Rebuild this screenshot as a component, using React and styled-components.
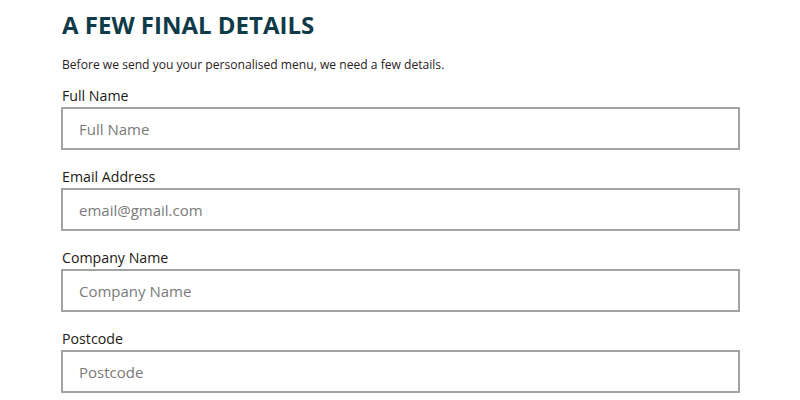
import React from 'react'
import styled, { createGlobalStyle } from 'styled-components'

const GlobalStyle = createGlobalStyle`
  body {
    margin: 0;
    background: #ffffff;
    font-family: "Open Sans", "Liberation Sans", sans-serif;
  }
`

const Container = styled.div`
  width: 800px;
  height: 400px;
  overflow: hidden;
  padding: 0 60px 0 61px;
  box-sizing: border-box;
`
const Title = styled.h1`
  margin: 9px 0 0 1px;
  font-size: 24px;
  line-height: 32px;
  font-weight: 700;
  color: #0f3a48;
  letter-spacing: 0;
`
const Intro = styled.p`
  margin: 15px 0 0 1px;
  font-size: 12.1px;
  line-height: 18px;
  color: #2a1d1d;
`
const Form = styled.form`
  display: flex;
  flex-direction: column;
  gap: 17px;
  margin-top: 12px;
`
const Field = styled.div`
  display: flex;
  flex-direction: column;
`
const Label = styled.label`
  font-size: 14.2px;
  line-height: 20px;
  color: #231a14;
  margin: 0 0 1px 1px;
`
const Input = styled.input`
  height: 43px;
  box-sizing: border-box;
  border: 2px solid #a3a3a3;
  padding: 0 16px;
  font-family: "Open Sans", "Liberation Sans", sans-serif;
  font-size: 15px;
  color: #333;
  outline: none;
  &::placeholder {
    color: #7a7a7a;
  }
`

const fields = [
  { label: 'Full Name', placeholder: 'Full Name' },
  { label: 'Email Address', placeholder: 'email@gmail.com' },
  { label: 'Company Name', placeholder: 'Company Name' },
  { label: 'Postcode', placeholder: 'Postcode' },
]

const App = () => {
  return (
    <Container>
      <GlobalStyle />
      <Title>A FEW FINAL DETAILS</Title>
      <Intro>Before we send you your personalised menu, we need a few details.</Intro>
      <Form>
        {fields.map((f) => (
          <Field key={f.label}>
            <Label>{f.label}</Label>
            <Input placeholder={f.placeholder} />
          </Field>
        ))}
      </Form>
    </Container>
  )
}

export default App
